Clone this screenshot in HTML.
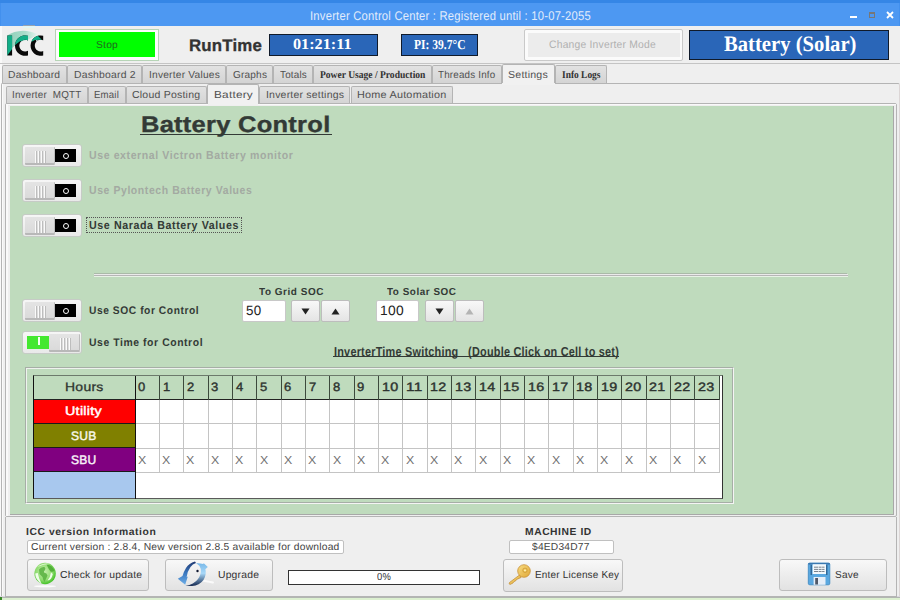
<!DOCTYPE html><html><head><meta charset="utf-8"><style>
html,body{margin:0;padding:0;width:900px;height:600px;overflow:hidden;background:#efefef;position:relative}
div,span,svg{position:absolute}
span{white-space:pre;transform-origin:0 0;text-rendering:geometricPrecision}
</style></head><body>
<div style="left:0px;top:0px;width:900px;height:26px;background:#4d98f2"></div>
<div style="left:0px;top:0px;width:900px;height:3px;background:#3586e6"></div>
<div style="left:0px;top:3px;width:1px;height:23px;background:#4290ee"></div>
<div style="left:899px;top:3px;width:1px;height:23px;background:#4290ee"></div>
<div style="left:0px;top:26px;width:1.5px;height:572px;background:#f9f9f9"></div>
<div style="left:850px;top:16px;width:7px;height:2px;background:#fff"></div>
<div style="left:869px;top:12px;width:6px;height:6px;border:1px solid #777;border-top-width:2px;box-sizing:border-box"></div>
<svg style="position:absolute;left:886px;top:11px" width="8" height="8"><path d="M1 1L7 7M7 1L1 7" stroke="#fff" stroke-width="1.8"/></svg>
<svg style="position:absolute;left:0px;top:25px" width="55" height="37" viewBox="0 25 55 37">
<defs>
<clipPath id="cI"><rect x="7.3" y="35.6" width="4.8" height="20"/></clipPath>
<clipPath id="cC1"><path d="M28,35.8 A10.2,10.2 0 1 0 28,55.4 L28,50.8 A5.9,5.9 0 1 1 28,40.4 Z"/></clipPath>
<clipPath id="cC2"><path d="M43.2,35.7 A10.2,10.2 0 1 0 43.2,55.5 L43.2,50.94 A5.9,5.9 0 1 1 43.2,40.26 Z"/></clipPath>
<linearGradient id="lsw" x1="0" y1="0" x2="1" y2="0"><stop offset="0" stop-color="#8fd0b9"/><stop offset="0.6" stop-color="#a9dccb"/><stop offset="1" stop-color="#e4f2ee"/></linearGradient>
</defs>
<path d="M7.3,35.6 Q14,31 23,30.8 Q31,31 37,34 L34,37 L28,39.5 L19.3,42 L12.1,48 L12.1,35.6 Z" fill="url(#lsw)"/>
<g clip-path="url(#cI)"><rect x="0" y="25" width="55" height="37" fill="#0a0a0a"/><path d="M0,25 H14 V46.5 L7.3,55.5 L0,56 Z" fill="#12ae88"/></g>
<g clip-path="url(#cC1)"><rect x="0" y="25" width="55" height="37" fill="#0a0a0a"/><path d="M0,25 H30 V40.6 L20,41.2 L14,45.8 L0,46 Z" fill="#12ae88"/></g>
<g clip-path="url(#cC2)"><rect x="0" y="25" width="55" height="37" fill="#0a0a0a"/><path d="M0,25 H27.1 L41.8,39.7 L35,40 L30,42.5 L0,43 Z" fill="#12ae88"/><path d="M36,40 L42,40 L40,46 L36,44Z" fill="#d6f2ee" opacity="0.8"/></g>
</svg>
<div style="left:23px;top:25px;width:12px;height:1px;background:#9aa4b0"></div>
<div style="left:23px;top:26px;width:12px;height:2px;background:#e2f6f6"></div>
<div style="left:23px;top:28px;width:12px;height:1.5px;background:#f0f2e4"></div>
<div style="left:55px;top:29px;width:104px;height:32px;border:1px solid #b6d4b6;background:#fcfcfc;box-sizing:border-box"></div>
<div style="left:59px;top:32px;width:96px;height:25px;background:#00ff00"></div>
<div style="left:269px;top:34px;width:109px;height:22px;background:#2a66b8;border:1px solid #101a2a;box-sizing:border-box"></div>
<div style="left:401px;top:34px;width:77px;height:22px;background:#2a66b8;border:1px solid #101a2a;box-sizing:border-box"></div>
<div style="left:524px;top:29px;width:159px;height:32px;border:1px solid #c9c9c9;background:#fbfbfb;box-sizing:border-box;border-radius:2px"></div>
<div style="left:528px;top:33px;width:152px;height:24px;background:#ececec"></div>
<div style="left:689px;top:30px;width:200px;height:29.5px;background:#2a66b8;border:1px solid #101a2a;box-sizing:border-box"></div>
<div style="left:0px;top:63px;width:900px;height:1px;background:#c4c4c4"></div>
<div style="left:2px;top:65px;width:65.2px;height:18px;background:linear-gradient(#e2e2e2,#d4d4d4);border:1px solid #b4b4b4;border-bottom:none;border-radius:2px 2px 0 0;box-sizing:border-box"></div>
<div style="left:67.2px;top:65px;width:74.8px;height:18px;background:linear-gradient(#e2e2e2,#d4d4d4);border:1px solid #b4b4b4;border-bottom:none;border-radius:2px 2px 0 0;box-sizing:border-box"></div>
<div style="left:142.2px;top:65px;width:84.0px;height:18px;background:linear-gradient(#e2e2e2,#d4d4d4);border:1px solid #b4b4b4;border-bottom:none;border-radius:2px 2px 0 0;box-sizing:border-box"></div>
<div style="left:226.2px;top:65px;width:47.10000000000002px;height:18px;background:linear-gradient(#e2e2e2,#d4d4d4);border:1px solid #b4b4b4;border-bottom:none;border-radius:2px 2px 0 0;box-sizing:border-box"></div>
<div style="left:273.3px;top:65px;width:40.0px;height:18px;background:linear-gradient(#e2e2e2,#d4d4d4);border:1px solid #b4b4b4;border-bottom:none;border-radius:2px 2px 0 0;box-sizing:border-box"></div>
<div style="left:313.2px;top:65px;width:118.40000000000003px;height:18px;background:linear-gradient(#e2e2e2,#d4d4d4);border:1px solid #b4b4b4;border-bottom:none;border-radius:2px 2px 0 0;box-sizing:border-box"></div>
<div style="left:431.6px;top:65px;width:70.39999999999998px;height:18px;background:linear-gradient(#e2e2e2,#d4d4d4);border:1px solid #b4b4b4;border-bottom:none;border-radius:2px 2px 0 0;box-sizing:border-box"></div>
<div style="left:502px;top:64px;width:53px;height:20px;background:#f1f1f1;border:1px solid #b4b4b4;border-bottom:none;border-radius:2px 2px 0 0;box-sizing:border-box"></div>
<div style="left:555px;top:65px;width:51.5px;height:18px;background:linear-gradient(#e2e2e2,#d4d4d4);border:1px solid #b4b4b4;border-bottom:none;border-radius:2px 2px 0 0;box-sizing:border-box"></div>
<div style="left:1px;top:83px;width:899px;height:515px;border:1px solid #b4b4b4;border-right-color:#dcd6d6;border-radius:2px;box-sizing:border-box;background:#efefef"></div>
<div style="left:2px;top:84px;width:1px;height:513px;background:#fafafa"></div>
<div style="left:0px;top:596px;width:900px;height:1px;background:#dcd8e0"></div>
<div style="left:0px;top:597px;width:900px;height:1px;background:#b2b6b2"></div>
<div style="left:0px;top:598px;width:900px;height:2px;background:#dcf0d0"></div>
<div style="left:0px;top:597px;width:2px;height:3px;background:#3a8a2a"></div>
<div style="left:502px;top:83px;width:53px;height:1.5px;background:#f1f1f1"></div>
<div style="left:503px;top:83px;width:51px;height:2px;background:#f1f1f1"></div>
<div style="left:5.5px;top:86px;width:82.5px;height:17.5px;background:linear-gradient(#e2e2e2,#d4d4d4);border:1px solid #b4b4b4;border-bottom:none;border-radius:2px 2px 0 0;box-sizing:border-box"></div>
<div style="left:88px;top:86px;width:38px;height:17.5px;background:linear-gradient(#e2e2e2,#d4d4d4);border:1px solid #b4b4b4;border-bottom:none;border-radius:2px 2px 0 0;box-sizing:border-box"></div>
<div style="left:126px;top:86px;width:81.30000000000001px;height:17.5px;background:linear-gradient(#e2e2e2,#d4d4d4);border:1px solid #b4b4b4;border-bottom:none;border-radius:2px 2px 0 0;box-sizing:border-box"></div>
<div style="left:207.3px;top:84px;width:52.0px;height:20.5px;background:#f1f1f1;border:1px solid #b4b4b4;border-bottom:none;border-radius:2px 2px 0 0;box-sizing:border-box"></div>
<div style="left:259.3px;top:86px;width:91.19999999999999px;height:17.5px;background:linear-gradient(#e2e2e2,#d4d4d4);border:1px solid #b4b4b4;border-bottom:none;border-radius:2px 2px 0 0;box-sizing:border-box"></div>
<div style="left:350.5px;top:86px;width:102.5px;height:17.5px;background:linear-gradient(#e2e2e2,#d4d4d4);border:1px solid #b4b4b4;border-bottom:none;border-radius:2px 2px 0 0;box-sizing:border-box"></div>
<div style="left:5px;top:103px;width:892px;height:414px;border:1px solid #b4b4b4;border-radius:2px;box-sizing:border-box;background:#efefef"></div>
<div style="left:6px;top:104px;width:2px;height:412px;background:#f9f9f9"></div>
<div style="left:6px;top:104px;width:890px;height:1px;background:#f9f9f9"></div>
<div style="left:208px;top:103px;width:50px;height:2px;background:#f1f1f1"></div>
<div style="left:5px;top:517px;width:892px;height:80px;border:1px solid #b4b4b4;border-top:none;box-sizing:border-box"></div>
<div style="left:10px;top:106px;width:884px;height:409px;background:#bfdbbd;border-right:1px solid #a8a8a8;border-bottom:1px solid #a8a8a8;box-sizing:border-box"></div>
<div style="left:139.5px;top:133.5px;width:192px;height:1.6px;background:#333a36"></div>
<div style="left:22px;top:144px;width:60px;height:23px;border:1px solid #c6cbc6;border-radius:3px;background:linear-gradient(#f6f6f6,#e9e9e9);box-sizing:border-box"></div><div style="left:55px;top:149px;width:21px;height:13px;background:#000"></div><div style="left:62.5px;top:152.7px;width:6.2px;height:6.2px;border:1.4px solid #fff;border-radius:50%;box-sizing:border-box"></div><div style="left:24.5px;top:146.5px;width:30.5px;height:18.5px;background:linear-gradient(#e4e4e4,#dadada);border-right:1px solid #bcbcbc;border-bottom:2px solid #b8b8b8;box-sizing:border-box;border-radius:1px"></div><div style="left:35.0px;top:150.5px;width:1px;height:12px;background:#fafafa;border-right:1px solid #bdbdbd"></div><div style="left:38.2px;top:150.5px;width:1px;height:12px;background:#fafafa;border-right:1px solid #bdbdbd"></div><div style="left:41.4px;top:150.5px;width:1px;height:12px;background:#fafafa;border-right:1px solid #bdbdbd"></div><div style="left:44.0px;top:150.5px;width:1px;height:12px;background:#fafafa;border-right:1px solid #bdbdbd"></div>
<div style="left:22px;top:179px;width:60px;height:23px;border:1px solid #c6cbc6;border-radius:3px;background:linear-gradient(#f6f6f6,#e9e9e9);box-sizing:border-box"></div><div style="left:55px;top:184px;width:21px;height:13px;background:#000"></div><div style="left:62.5px;top:187.7px;width:6.2px;height:6.2px;border:1.4px solid #fff;border-radius:50%;box-sizing:border-box"></div><div style="left:24.5px;top:181.5px;width:30.5px;height:18.5px;background:linear-gradient(#e4e4e4,#dadada);border-right:1px solid #bcbcbc;border-bottom:2px solid #b8b8b8;box-sizing:border-box;border-radius:1px"></div><div style="left:35.0px;top:185.5px;width:1px;height:12px;background:#fafafa;border-right:1px solid #bdbdbd"></div><div style="left:38.2px;top:185.5px;width:1px;height:12px;background:#fafafa;border-right:1px solid #bdbdbd"></div><div style="left:41.4px;top:185.5px;width:1px;height:12px;background:#fafafa;border-right:1px solid #bdbdbd"></div><div style="left:44.0px;top:185.5px;width:1px;height:12px;background:#fafafa;border-right:1px solid #bdbdbd"></div>
<div style="left:22px;top:214px;width:60px;height:23px;border:1px solid #c6cbc6;border-radius:3px;background:linear-gradient(#f6f6f6,#e9e9e9);box-sizing:border-box"></div><div style="left:55px;top:219px;width:21px;height:13px;background:#000"></div><div style="left:62.5px;top:222.7px;width:6.2px;height:6.2px;border:1.4px solid #fff;border-radius:50%;box-sizing:border-box"></div><div style="left:24.5px;top:216.5px;width:30.5px;height:18.5px;background:linear-gradient(#e4e4e4,#dadada);border-right:1px solid #bcbcbc;border-bottom:2px solid #b8b8b8;box-sizing:border-box;border-radius:1px"></div><div style="left:35.0px;top:220.5px;width:1px;height:12px;background:#fafafa;border-right:1px solid #bdbdbd"></div><div style="left:38.2px;top:220.5px;width:1px;height:12px;background:#fafafa;border-right:1px solid #bdbdbd"></div><div style="left:41.4px;top:220.5px;width:1px;height:12px;background:#fafafa;border-right:1px solid #bdbdbd"></div><div style="left:44.0px;top:220.5px;width:1px;height:12px;background:#fafafa;border-right:1px solid #bdbdbd"></div>
<div style="left:86px;top:217px;width:155.5px;height:16px;border:1px dotted #555;box-sizing:border-box"></div>
<div style="left:94px;top:273px;width:753px;height:1px;background:#aabaa8"></div>
<div style="left:94px;top:274px;width:754px;height:1px;background:#ebebeb"></div>
<div style="left:94px;top:275px;width:754px;height:1px;background:#b6b6b6"></div>
<div style="left:94px;top:276px;width:754px;height:1px;background:#e8f2e6"></div>
<div style="left:22px;top:299px;width:60px;height:23px;border:1px solid #c6cbc6;border-radius:3px;background:linear-gradient(#f6f6f6,#e9e9e9);box-sizing:border-box"></div><div style="left:55px;top:304px;width:21px;height:13px;background:#000"></div><div style="left:62.5px;top:307.7px;width:6.2px;height:6.2px;border:1.4px solid #fff;border-radius:50%;box-sizing:border-box"></div><div style="left:24.5px;top:301.5px;width:30.5px;height:18.5px;background:linear-gradient(#e4e4e4,#dadada);border-right:1px solid #bcbcbc;border-bottom:2px solid #b8b8b8;box-sizing:border-box;border-radius:1px"></div><div style="left:35.0px;top:305.5px;width:1px;height:12px;background:#fafafa;border-right:1px solid #bdbdbd"></div><div style="left:38.2px;top:305.5px;width:1px;height:12px;background:#fafafa;border-right:1px solid #bdbdbd"></div><div style="left:41.4px;top:305.5px;width:1px;height:12px;background:#fafafa;border-right:1px solid #bdbdbd"></div><div style="left:44.0px;top:305.5px;width:1px;height:12px;background:#fafafa;border-right:1px solid #bdbdbd"></div>
<div style="left:22px;top:331px;width:60px;height:23px;border:1px solid #c6cbc6;border-radius:3px;background:linear-gradient(#f6f6f6,#e9e9e9);box-sizing:border-box"></div><div style="left:27px;top:336px;width:22px;height:13px;background:#44e830"></div><div style="left:38px;top:337px;width:2px;height:8px;background:#f4fff0"></div><div style="left:49px;top:333.5px;width:30.5px;height:18.5px;background:linear-gradient(#e4e4e4,#dadada);border-right:1px solid #bcbcbc;border-bottom:2px solid #b8b8b8;box-sizing:border-box;border-radius:1px"></div><div style="left:59.5px;top:337.5px;width:1px;height:12px;background:#fafafa;border-right:1px solid #bdbdbd"></div><div style="left:62.7px;top:337.5px;width:1px;height:12px;background:#fafafa;border-right:1px solid #bdbdbd"></div><div style="left:65.9px;top:337.5px;width:1px;height:12px;background:#fafafa;border-right:1px solid #bdbdbd"></div><div style="left:68.5px;top:337.5px;width:1px;height:12px;background:#fafafa;border-right:1px solid #bdbdbd"></div>
<div style="left:241.5px;top:300px;width:44px;height:21.5px;background:#fff;border:1px solid #c8c8c8;border-radius:2px;box-sizing:border-box"></div>
<div style="left:290.7px;top:300px;width:29px;height:22px;background:linear-gradient(#f8f8f8,#e4e4e4);border:1px solid #bdbdbd;border-radius:2px;box-sizing:border-box"></div>
<svg style="position:absolute;left:300.7px;top:308px" width="9" height="7"><path d="M0.5 0.5H8.5L4.5 6.5Z" fill="#222"/></svg>
<div style="left:321.3px;top:300px;width:29px;height:22px;background:linear-gradient(#f8f8f8,#e4e4e4);border:1px solid #bdbdbd;border-radius:2px;box-sizing:border-box"></div>
<svg style="position:absolute;left:331.3px;top:308px" width="9" height="7"><path d="M0.5 6.5H8.5L4.5 0.5Z" fill="#222"/></svg>
<div style="left:375.5px;top:300px;width:43.5px;height:21.5px;background:#fff;border:1px solid #c8c8c8;border-radius:2px;box-sizing:border-box"></div>
<div style="left:424.6px;top:300px;width:29px;height:22px;background:linear-gradient(#f8f8f8,#e4e4e4);border:1px solid #bdbdbd;border-radius:2px;box-sizing:border-box"></div>
<svg style="position:absolute;left:434.6px;top:308px" width="9" height="7"><path d="M0.5 0.5H8.5L4.5 6.5Z" fill="#222"/></svg>
<div style="left:455.4px;top:300px;width:29px;height:22px;background:linear-gradient(#f8f8f8,#e4e4e4);border:1px solid #bdbdbd;border-radius:2px;box-sizing:border-box"></div>
<svg style="position:absolute;left:465.4px;top:308px" width="9" height="7"><path d="M0.5 6.5H8.5L4.5 0.5Z" fill="#b4b4b4"/></svg>
<div style="left:333px;top:356.3px;width:286px;height:1px;background:#333a36"></div>
<div style="left:25px;top:367px;width:709px;height:137px;border-top:1px solid #a6aea6;border-left:1px solid #a6aea6;border-bottom:1px solid #f4f4f4;border-right:1px solid #f4f4f4;box-sizing:border-box"></div>
<div style="left:26px;top:368px;width:707px;height:135px;border-top:1px solid #eef2ee;border-left:1px solid #eef2ee;border-bottom:1px solid #a6aea6;border-right:1px solid #a6aea6;box-sizing:border-box"></div>
<div style="left:33px;top:374.5px;width:690px;height:124.5px;background:#fff;border:1px solid #111;border-top-color:#6c7a6c;border-bottom-color:#5a5a5a;border-right-color:#333;box-sizing:border-box"></div>
<div style="left:34px;top:375.5px;width:685px;height:24px;background:#bfdbbd"></div>
<div style="left:34px;top:399px;width:685px;height:1px;background:#222"></div>
<div style="left:719px;top:375.5px;width:1px;height:24px;background:#222"></div>
<div style="left:34px;top:399.5px;width:101px;height:23.0px;background:#ff0000"></div>
<div style="left:34px;top:422.5px;width:101px;height:1px;background:#1a1a1a"></div>
<div style="left:34px;top:423.5px;width:101px;height:23.5px;background:#808000"></div>
<div style="left:34px;top:447px;width:101px;height:1px;background:#1a1a1a"></div>
<div style="left:34px;top:448px;width:101px;height:23.30000000000001px;background:#800080"></div>
<div style="left:34px;top:471.3px;width:101px;height:1px;background:#1a1a1a"></div>
<div style="left:34px;top:472.3px;width:101px;height:25.69999999999999px;background:#a8c8ee"></div>
<div style="left:134.5px;top:375.5px;width:1.5px;height:123px;background:#111"></div>
<div style="left:158.84px;top:375.5px;width:1px;height:24px;background:#3c4a3c"></div>
<div style="left:158.84px;top:399.5px;width:1px;height:73px;background:#c4c4c4"></div>
<div style="left:183.18px;top:375.5px;width:1px;height:24px;background:#3c4a3c"></div>
<div style="left:183.18px;top:399.5px;width:1px;height:73px;background:#c4c4c4"></div>
<div style="left:207.51999999999998px;top:375.5px;width:1px;height:24px;background:#3c4a3c"></div>
<div style="left:207.51999999999998px;top:399.5px;width:1px;height:73px;background:#c4c4c4"></div>
<div style="left:231.86px;top:375.5px;width:1px;height:24px;background:#3c4a3c"></div>
<div style="left:231.86px;top:399.5px;width:1px;height:73px;background:#c4c4c4"></div>
<div style="left:256.2px;top:375.5px;width:1px;height:24px;background:#3c4a3c"></div>
<div style="left:256.2px;top:399.5px;width:1px;height:73px;background:#c4c4c4"></div>
<div style="left:280.53999999999996px;top:375.5px;width:1px;height:24px;background:#3c4a3c"></div>
<div style="left:280.53999999999996px;top:399.5px;width:1px;height:73px;background:#c4c4c4"></div>
<div style="left:304.88px;top:375.5px;width:1px;height:24px;background:#3c4a3c"></div>
<div style="left:304.88px;top:399.5px;width:1px;height:73px;background:#c4c4c4"></div>
<div style="left:329.22px;top:375.5px;width:1px;height:24px;background:#3c4a3c"></div>
<div style="left:329.22px;top:399.5px;width:1px;height:73px;background:#c4c4c4"></div>
<div style="left:353.56px;top:375.5px;width:1px;height:24px;background:#3c4a3c"></div>
<div style="left:353.56px;top:399.5px;width:1px;height:73px;background:#c4c4c4"></div>
<div style="left:377.9px;top:375.5px;width:1px;height:24px;background:#3c4a3c"></div>
<div style="left:377.9px;top:399.5px;width:1px;height:73px;background:#c4c4c4"></div>
<div style="left:402.24px;top:375.5px;width:1px;height:24px;background:#3c4a3c"></div>
<div style="left:402.24px;top:399.5px;width:1px;height:73px;background:#c4c4c4"></div>
<div style="left:426.58px;top:375.5px;width:1px;height:24px;background:#3c4a3c"></div>
<div style="left:426.58px;top:399.5px;width:1px;height:73px;background:#c4c4c4"></div>
<div style="left:450.92px;top:375.5px;width:1px;height:24px;background:#3c4a3c"></div>
<div style="left:450.92px;top:399.5px;width:1px;height:73px;background:#c4c4c4"></div>
<div style="left:475.26px;top:375.5px;width:1px;height:24px;background:#3c4a3c"></div>
<div style="left:475.26px;top:399.5px;width:1px;height:73px;background:#c4c4c4"></div>
<div style="left:499.6px;top:375.5px;width:1px;height:24px;background:#3c4a3c"></div>
<div style="left:499.6px;top:399.5px;width:1px;height:73px;background:#c4c4c4"></div>
<div style="left:523.94px;top:375.5px;width:1px;height:24px;background:#3c4a3c"></div>
<div style="left:523.94px;top:399.5px;width:1px;height:73px;background:#c4c4c4"></div>
<div style="left:548.28px;top:375.5px;width:1px;height:24px;background:#3c4a3c"></div>
<div style="left:548.28px;top:399.5px;width:1px;height:73px;background:#c4c4c4"></div>
<div style="left:572.62px;top:375.5px;width:1px;height:24px;background:#3c4a3c"></div>
<div style="left:572.62px;top:399.5px;width:1px;height:73px;background:#c4c4c4"></div>
<div style="left:596.96px;top:375.5px;width:1px;height:24px;background:#3c4a3c"></div>
<div style="left:596.96px;top:399.5px;width:1px;height:73px;background:#c4c4c4"></div>
<div style="left:621.3px;top:375.5px;width:1px;height:24px;background:#3c4a3c"></div>
<div style="left:621.3px;top:399.5px;width:1px;height:73px;background:#c4c4c4"></div>
<div style="left:645.64px;top:375.5px;width:1px;height:24px;background:#3c4a3c"></div>
<div style="left:645.64px;top:399.5px;width:1px;height:73px;background:#c4c4c4"></div>
<div style="left:669.98px;top:375.5px;width:1px;height:24px;background:#3c4a3c"></div>
<div style="left:669.98px;top:399.5px;width:1px;height:73px;background:#c4c4c4"></div>
<div style="left:694.32px;top:375.5px;width:1px;height:24px;background:#3c4a3c"></div>
<div style="left:694.32px;top:399.5px;width:1px;height:73px;background:#c4c4c4"></div>
<div style="left:718.66px;top:375.5px;width:1px;height:24px;background:#3c4a3c"></div>
<div style="left:718.66px;top:399.5px;width:1px;height:73px;background:#c4c4c4"></div>
<div style="left:136px;top:423px;width:583.5px;height:1px;background:#c4c4c4"></div>
<div style="left:136px;top:447.5px;width:583.5px;height:1px;background:#c4c4c4"></div>
<div style="left:136px;top:471.8px;width:583.5px;height:1px;background:#c4c4c4"></div>
<div style="left:26.5px;top:539.5px;width:317px;height:14px;background:#fff;border:1px solid #c0c0c0;border-radius:2px;box-sizing:border-box"></div>
<div style="left:26.5px;top:558.5px;width:122.5px;height:32.5px;background:linear-gradient(#f8f8f8,#e2e2e2);border:1px solid #bdbdbd;border-radius:3px;box-sizing:border-box"></div>
<div style="left:164.5px;top:558.5px;width:108px;height:32.5px;background:linear-gradient(#f8f8f8,#e2e2e2);border:1px solid #bdbdbd;border-radius:3px;box-sizing:border-box"></div>
<div style="left:503px;top:559px;width:120px;height:32.5px;background:linear-gradient(#f8f8f8,#e2e2e2);border:1px solid #bdbdbd;border-radius:3px;box-sizing:border-box"></div>
<div style="left:779px;top:558.5px;width:108px;height:32.5px;background:linear-gradient(#f8f8f8,#e2e2e2);border:1px solid #bdbdbd;border-radius:3px;box-sizing:border-box"></div>
<div style="left:288px;top:570px;width:192px;height:15px;background:#fff;border:1.5px solid #333;box-sizing:border-box"></div>
<div style="left:508.5px;top:539.5px;width:105px;height:14px;background:#fff;border:1px solid #c0c0c0;border-radius:2px;box-sizing:border-box"></div>
<svg style="position:absolute;left:28px;top:558px" width="34" height="32" viewBox="28 558 34 32">
<defs><radialGradient id="gg" cx="0.45" cy="0.42" r="0.6"><stop offset="0" stop-color="#c8f0b0"/><stop offset="0.65" stop-color="#90dc70"/><stop offset="1" stop-color="#3cc020"/></radialGradient></defs>
<ellipse cx="45" cy="586.2" rx="11" ry="1" fill="#fcfcfc"/>
<circle cx="45.1" cy="573.5" r="10.7" fill="url(#gg)"/>
<path d="M39,569.5 Q41,566.5 44.5,567 Q46,568.5 45,570 Q43.5,571 44,572.5 Q47,573 47.5,575.5 Q46,579 44.5,582 Q43,580 42.5,577 Q41,575.5 39.5,574 Z" fill="#58b040" opacity="0.85"/>
<path d="M46.5,564.5 Q52,565 54.5,570.5 Q53,572.5 50.5,571.5 Q48.5,569 46.5,564.5Z" fill="#48a830" opacity="0.85"/>
<path d="M35.2,573.5 Q35.5,580 41.5,583.5 Q38.5,578 37.8,573Z" fill="#f4fff0" opacity="0.95"/>
<path d="M51,572.5 Q50.5,577 47.5,580.5 Q51.5,580 52.8,574Z" fill="#f4fff0" opacity="0.95"/>
<path d="M37.5,567 Q43,562 51,564 Q44,563.5 37.5,567Z" fill="#f0fce8" opacity="0.9"/>
</svg>
<svg style="position:absolute;left:172px;top:558px" width="50" height="32" viewBox="172 558 50 32">
<defs>
<linearGradient id="ugl" x1="0" y1="0" x2="0" y2="1"><stop offset="0" stop-color="#203870"/><stop offset="0.5" stop-color="#3a78c0"/><stop offset="1" stop-color="#70b0e8"/></linearGradient>
<linearGradient id="ugr" x1="0" y1="0" x2="0" y2="1"><stop offset="0" stop-color="#78b8e8"/><stop offset="0.45" stop-color="#a8d8f8"/><stop offset="1" stop-color="#142850"/></linearGradient>
</defs>
<path d="M200,580 L213,582.5" stroke="#fafafa" stroke-width="2" stroke-linecap="round"/>
<path d="M195,561.5 Q189,563 186,568 Q183.5,572 182.5,576 L177.8,578.8 L185.2,584.8 L187.8,576.5 L186.6,577.2 Q187.5,571 190.5,567 Q192.5,564 196,563 Z" fill="url(#ugl)"/>
<path d="M196.1,563 Q201,563.5 203.1,564.1 L203.8,563.2 L207.8,567 L205.3,569.2 L205.2,568.5 Q207,574 203.5,580 Q199.5,585.5 192,586 L185.3,585.8 Q194,584.5 198,579 Q201.5,574 200.8,569 Q200,565.5 196.1,563 Z" fill="url(#ugr)"/>
<circle cx="197.5" cy="571" r="1.2" fill="#101830"/>
</svg>
<svg style="position:absolute;left:503px;top:560px" width="34" height="30" viewBox="503 560 34 30">
<defs><linearGradient id="kg" x1="0" y1="0" x2="1" y2="1"><stop offset="0" stop-color="#f8dc80"/><stop offset="1" stop-color="#e0a838"/></linearGradient></defs>
<path d="M519.5,575 L509.5,582.5 Q508.5,584 510,584.5 L513,583 L514,581.5 L515.5,581 L516.5,579.5 L521,577.5 Z" fill="url(#kg)" stroke="#c08a30" stroke-width="0.7"/>
<circle cx="524" cy="571" r="6.3" fill="url(#kg)" stroke="#c89038" stroke-width="0.8"/>
<circle cx="525" cy="570.3" r="2.2" fill="#f0c858" stroke="#c08a30" stroke-width="0.6"/>
<circle cx="525" cy="570.3" r="0.9" fill="#fff4c8"/>
</svg>
<svg style="position:absolute;left:804px;top:560px" width="30" height="28" viewBox="804 560 30 28">
<rect x="808.3" y="563" width="21.5" height="21.8" rx="1.5" fill="#5aa8e0" stroke="#3a86c0" stroke-width="0.8"/>
<rect x="808.3" y="563" width="21.5" height="1.6" fill="#3a78b0"/>
<rect x="812.6" y="564.2" width="13.4" height="9.8" fill="#f2f8fc"/>
<path d="M814,567.2h10.5M814,569.4h10.5M814,571.5h10.5" stroke="#5a6470" stroke-width="0.8" stroke-dasharray="4 0.6 3 0.5"/>
<rect x="810.6" y="565" width="1.2" height="10" fill="#2a5a88"/>
<rect x="826.2" y="565" width="1.2" height="10" fill="#2a5a88"/>
<rect x="813.6" y="577" width="11.9" height="7.8" fill="#e6eef8"/>
<rect x="815.2" y="578" width="2.8" height="6.5" fill="#505868"/>
</svg>
<span id="t0" style="left:310.00px;top:10.00px;font-size:12.6px;line-height:12.6px;font-family:'Liberation Sans', sans-serif;font-weight:normal;color:#e2ecfb;letter-spacing:0.02em;transform:scaleX(0.8924);">Inverter Control Center : Registered until : 10-07-2055</span>
<span id="t1" style="left:95.70px;top:41.00px;font-size:10.2px;line-height:10.2px;font-family:'Liberation Sans', sans-serif;font-weight:normal;color:#1f6a1f;letter-spacing:0.02em;transform:scaleX(1.0100);">Stop</span>
<span id="t2" style="left:189.00px;top:38.00px;font-size:16.9px;line-height:16.9px;font-family:'Liberation Sans', sans-serif;font-weight:bold;color:#333;letter-spacing:0.01em;transform:scaleX(0.9981);-webkit-text-stroke:0.3px #333;">RunTime</span>
<span id="t3" style="left:293.00px;top:37.00px;font-size:15.3px;line-height:15.3px;font-family:'Liberation Serif', serif;font-weight:bold;color:#fff;letter-spacing:0em;transform:scaleX(1.0588);">01:21:11</span>
<span id="t4" style="left:413.50px;top:38.00px;font-size:13.7px;line-height:13.7px;font-family:'Liberation Serif', serif;font-weight:bold;color:#fff;letter-spacing:0em;transform:scaleX(0.8445);">PI: 39.7°C</span>
<span id="t5" style="left:549.30px;top:40.00px;font-size:10.9px;line-height:10.9px;font-family:'Liberation Sans', sans-serif;font-weight:normal;color:#b0b0b0;letter-spacing:0.02em;transform:scaleX(0.9491);">Change Inverter Mode</span>
<span id="t6" style="left:724.00px;top:33.00px;font-size:22px;line-height:22px;font-family:'Liberation Serif', serif;font-weight:bold;color:#fff;letter-spacing:0em;transform:scaleX(0.9389);">Battery (Solar)</span>
<span id="t7" style="left:8.30px;top:71.00px;font-size:10.2px;line-height:10.2px;font-family:'Liberation Sans', sans-serif;font-weight:normal;color:#505050;letter-spacing:0.02em;transform:scaleX(1.0099);">Dashboard</span>
<span id="t8" style="left:73.50px;top:71.00px;font-size:10.2px;line-height:10.2px;font-family:'Liberation Sans', sans-serif;font-weight:normal;color:#505050;letter-spacing:0.02em;transform:scaleX(1.0199);">Dashboard 2</span>
<span id="t9" style="left:148.50px;top:71.00px;font-size:10.2px;line-height:10.2px;font-family:'Liberation Sans', sans-serif;font-weight:normal;color:#505050;letter-spacing:0.02em;transform:scaleX(1.0024);">Inverter Values</span>
<span id="t10" style="left:232.50px;top:71.00px;font-size:10.2px;line-height:10.2px;font-family:'Liberation Sans', sans-serif;font-weight:normal;color:#505050;letter-spacing:0.02em;transform:scaleX(0.9844);">Graphs</span>
<span id="t11" style="left:279.60px;top:71.00px;font-size:10.2px;line-height:10.2px;font-family:'Liberation Sans', sans-serif;font-weight:normal;color:#505050;letter-spacing:0.02em;transform:scaleX(0.9697);">Totals</span>
<span id="t12" style="left:319.70px;top:71.00px;font-size:10.5px;line-height:10.5px;font-family:'Liberation Serif', serif;font-weight:bold;color:#303030;letter-spacing:0em;transform:scaleX(0.9087);">Power Usage / Production</span>
<span id="t13" style="left:437.90px;top:71.00px;font-size:10.2px;line-height:10.2px;font-family:'Liberation Sans', sans-serif;font-weight:normal;color:#505050;letter-spacing:0.02em;transform:scaleX(0.9622);">Threads Info</span>
<span id="t14" style="left:508.30px;top:71.00px;font-size:10.2px;line-height:10.2px;font-family:'Liberation Sans', sans-serif;font-weight:normal;color:#505050;letter-spacing:0.02em;transform:scaleX(1.0402);">Settings</span>
<span id="t15" style="left:561.50px;top:71.00px;font-size:10.5px;line-height:10.5px;font-family:'Liberation Serif', serif;font-weight:bold;color:#303030;letter-spacing:0em;transform:scaleX(0.8976);">Info Logs</span>
<span id="t16" style="left:11.80px;top:91.00px;font-size:10.2px;line-height:10.2px;font-family:'Liberation Sans', sans-serif;font-weight:normal;color:#505050;letter-spacing:0.02em;transform:scaleX(0.9663);">Inverter&nbsp;&nbsp;MQTT</span>
<span id="t17" style="left:94.30px;top:91.00px;font-size:10.2px;line-height:10.2px;font-family:'Liberation Sans', sans-serif;font-weight:normal;color:#505050;letter-spacing:0.02em;transform:scaleX(0.9434);">Email</span>
<span id="t18" style="left:132.30px;top:91.00px;font-size:10.2px;line-height:10.2px;font-family:'Liberation Sans', sans-serif;font-weight:normal;color:#505050;letter-spacing:0.02em;transform:scaleX(1.0334);">Cloud Posting</span>
<span id="t19" style="left:213.60px;top:91.00px;font-size:10.2px;line-height:10.2px;font-family:'Liberation Sans', sans-serif;font-weight:normal;color:#505050;letter-spacing:0.02em;transform:scaleX(1.1572);">Battery</span>
<span id="t20" style="left:265.60px;top:91.00px;font-size:10.2px;line-height:10.2px;font-family:'Liberation Sans', sans-serif;font-weight:normal;color:#505050;letter-spacing:0.02em;transform:scaleX(1.0296);">Inverter settings</span>
<span id="t21" style="left:356.80px;top:91.00px;font-size:10.2px;line-height:10.2px;font-family:'Liberation Sans', sans-serif;font-weight:normal;color:#505050;letter-spacing:0.02em;transform:scaleX(1.0649);">Home Automation</span>
<span id="t22" style="left:141.20px;top:114.00px;font-size:22.6px;line-height:22.6px;font-family:'Liberation Sans', sans-serif;font-weight:bold;color:#333a36;letter-spacing:0.01em;transform:scaleX(1.1290);-webkit-text-stroke:0.35px #333a36;">Battery Control</span>
<span id="t23" style="left:89.00px;top:151.00px;font-size:11.5px;line-height:11.5px;font-family:'Liberation Sans', sans-serif;font-weight:bold;color:#a3aaa2;letter-spacing:0.055em;transform:scaleX(0.9183);">Use external Victron Battery monitor</span>
<span id="t24" style="left:89.00px;top:186.00px;font-size:11.5px;line-height:11.5px;font-family:'Liberation Sans', sans-serif;font-weight:bold;color:#a3aaa2;letter-spacing:0.055em;transform:scaleX(0.9107);">Use Pylontech Battery Values</span>
<span id="t25" style="left:89.00px;top:221.00px;font-size:11.5px;line-height:11.5px;font-family:'Liberation Sans', sans-serif;font-weight:bold;color:#333a36;letter-spacing:0.055em;transform:scaleX(0.9284);">Use Narada Battery Values</span>
<span id="t26" style="left:89.00px;top:306.00px;font-size:11px;line-height:11px;font-family:'Liberation Sans', sans-serif;font-weight:bold;color:#333a36;letter-spacing:0.055em;transform:scaleX(0.9303);">Use SOC for Control</span>
<span id="t27" style="left:89.00px;top:338.00px;font-size:11px;line-height:11px;font-family:'Liberation Sans', sans-serif;font-weight:bold;color:#333a36;letter-spacing:0.055em;transform:scaleX(0.9454);">Use Time for Control</span>
<span id="t28" style="left:259.00px;top:288.00px;font-size:10.2px;line-height:10.2px;font-family:'Liberation Sans', sans-serif;font-weight:bold;color:#333a36;letter-spacing:0.055em;transform:scaleX(0.9768);">To Grid SOC</span>
<span id="t29" style="left:386.70px;top:288.00px;font-size:10.2px;line-height:10.2px;font-family:'Liberation Sans', sans-serif;font-weight:bold;color:#333a36;letter-spacing:0.055em;transform:scaleX(0.9687);">To Solar SOC</span>
<span id="t30" style="left:245.60px;top:304.00px;font-size:13.6px;line-height:13.6px;font-family:'Liberation Sans', sans-serif;font-weight:normal;color:#222;letter-spacing:0.02em;transform:scaleX(0.9827);">50</span>
<span id="t31" style="left:379.50px;top:304.00px;font-size:13.6px;line-height:13.6px;font-family:'Liberation Sans', sans-serif;font-weight:normal;color:#222;letter-spacing:0.02em;transform:scaleX(1.0170);">100</span>
<span id="t32" style="left:333.50px;top:345.00px;font-size:13px;line-height:13px;font-family:'Liberation Sans', sans-serif;font-weight:normal;color:#333a36;letter-spacing:0.02em;transform:scaleX(0.8375);font-weight:bold;">InverterTime&nbsp;Switching&nbsp;&nbsp;&nbsp;(Double&nbsp;Click&nbsp;on&nbsp;Cell&nbsp;to&nbsp;set)</span>
<span id="t33" style="left:138.20px;top:381.00px;font-size:12.2px;line-height:12.2px;font-family:'Liberation Sans', sans-serif;font-weight:normal;color:#2e3430;letter-spacing:0.02em;transform:scaleX(1.0667);-webkit-text-stroke:0.4px #2e3430;">0</span>
<span id="t34" style="left:137.80px;top:456.00px;font-size:11.5px;line-height:11.5px;font-family:'Liberation Sans', sans-serif;font-weight:normal;color:#707070;letter-spacing:0.02em;transform:scaleX(1.0751);">X</span>
<span id="t35" style="left:162.54px;top:381.00px;font-size:12.2px;line-height:12.2px;font-family:'Liberation Sans', sans-serif;font-weight:normal;color:#2e3430;letter-spacing:0.02em;transform:scaleX(1.0667);-webkit-text-stroke:0.4px #2e3430;">1</span>
<span id="t36" style="left:162.14px;top:456.00px;font-size:11.5px;line-height:11.5px;font-family:'Liberation Sans', sans-serif;font-weight:normal;color:#707070;letter-spacing:0.02em;transform:scaleX(1.0751);">X</span>
<span id="t37" style="left:186.88px;top:381.00px;font-size:12.2px;line-height:12.2px;font-family:'Liberation Sans', sans-serif;font-weight:normal;color:#2e3430;letter-spacing:0.02em;transform:scaleX(1.0667);-webkit-text-stroke:0.4px #2e3430;">2</span>
<span id="t38" style="left:186.48px;top:456.00px;font-size:11.5px;line-height:11.5px;font-family:'Liberation Sans', sans-serif;font-weight:normal;color:#707070;letter-spacing:0.02em;transform:scaleX(1.0751);">X</span>
<span id="t39" style="left:211.22px;top:381.00px;font-size:12.2px;line-height:12.2px;font-family:'Liberation Sans', sans-serif;font-weight:normal;color:#2e3430;letter-spacing:0.02em;transform:scaleX(1.0667);-webkit-text-stroke:0.4px #2e3430;">3</span>
<span id="t40" style="left:210.82px;top:456.00px;font-size:11.5px;line-height:11.5px;font-family:'Liberation Sans', sans-serif;font-weight:normal;color:#707070;letter-spacing:0.02em;transform:scaleX(1.0751);">X</span>
<span id="t41" style="left:235.56px;top:381.00px;font-size:12.2px;line-height:12.2px;font-family:'Liberation Sans', sans-serif;font-weight:normal;color:#2e3430;letter-spacing:0.02em;transform:scaleX(1.0667);-webkit-text-stroke:0.4px #2e3430;">4</span>
<span id="t42" style="left:235.16px;top:456.00px;font-size:11.5px;line-height:11.5px;font-family:'Liberation Sans', sans-serif;font-weight:normal;color:#707070;letter-spacing:0.02em;transform:scaleX(1.0751);">X</span>
<span id="t43" style="left:259.90px;top:381.00px;font-size:12.2px;line-height:12.2px;font-family:'Liberation Sans', sans-serif;font-weight:normal;color:#2e3430;letter-spacing:0.02em;transform:scaleX(1.0667);-webkit-text-stroke:0.4px #2e3430;">5</span>
<span id="t44" style="left:259.50px;top:456.00px;font-size:11.5px;line-height:11.5px;font-family:'Liberation Sans', sans-serif;font-weight:normal;color:#707070;letter-spacing:0.02em;transform:scaleX(1.0751);">X</span>
<span id="t45" style="left:284.24px;top:381.00px;font-size:12.2px;line-height:12.2px;font-family:'Liberation Sans', sans-serif;font-weight:normal;color:#2e3430;letter-spacing:0.02em;transform:scaleX(1.0667);-webkit-text-stroke:0.4px #2e3430;">6</span>
<span id="t46" style="left:283.84px;top:456.00px;font-size:11.5px;line-height:11.5px;font-family:'Liberation Sans', sans-serif;font-weight:normal;color:#707070;letter-spacing:0.02em;transform:scaleX(1.0751);">X</span>
<span id="t47" style="left:308.58px;top:381.00px;font-size:12.2px;line-height:12.2px;font-family:'Liberation Sans', sans-serif;font-weight:normal;color:#2e3430;letter-spacing:0.02em;transform:scaleX(1.0667);-webkit-text-stroke:0.4px #2e3430;">7</span>
<span id="t48" style="left:308.18px;top:456.00px;font-size:11.5px;line-height:11.5px;font-family:'Liberation Sans', sans-serif;font-weight:normal;color:#707070;letter-spacing:0.02em;transform:scaleX(1.0751);">X</span>
<span id="t49" style="left:332.92px;top:381.00px;font-size:12.2px;line-height:12.2px;font-family:'Liberation Sans', sans-serif;font-weight:normal;color:#2e3430;letter-spacing:0.02em;transform:scaleX(1.0667);-webkit-text-stroke:0.4px #2e3430;">8</span>
<span id="t50" style="left:332.52px;top:456.00px;font-size:11.5px;line-height:11.5px;font-family:'Liberation Sans', sans-serif;font-weight:normal;color:#707070;letter-spacing:0.02em;transform:scaleX(1.0751);">X</span>
<span id="t51" style="left:357.26px;top:381.00px;font-size:12.2px;line-height:12.2px;font-family:'Liberation Sans', sans-serif;font-weight:normal;color:#2e3430;letter-spacing:0.02em;transform:scaleX(1.0667);-webkit-text-stroke:0.4px #2e3430;">9</span>
<span id="t52" style="left:356.86px;top:456.00px;font-size:11.5px;line-height:11.5px;font-family:'Liberation Sans', sans-serif;font-weight:normal;color:#707070;letter-spacing:0.02em;transform:scaleX(1.0751);">X</span>
<span id="t53" style="left:381.60px;top:381.00px;font-size:12.2px;line-height:12.2px;font-family:'Liberation Sans', sans-serif;font-weight:normal;color:#2e3430;letter-spacing:0.02em;transform:scaleX(1.1746);-webkit-text-stroke:0.4px #2e3430;">10</span>
<span id="t54" style="left:381.20px;top:456.00px;font-size:11.5px;line-height:11.5px;font-family:'Liberation Sans', sans-serif;font-weight:normal;color:#707070;letter-spacing:0.02em;transform:scaleX(1.0751);">X</span>
<span id="t55" style="left:405.94px;top:381.00px;font-size:12.2px;line-height:12.2px;font-family:'Liberation Sans', sans-serif;font-weight:normal;color:#2e3430;letter-spacing:0.02em;transform:scaleX(1.2556);-webkit-text-stroke:0.4px #2e3430;">11</span>
<span id="t56" style="left:405.54px;top:456.00px;font-size:11.5px;line-height:11.5px;font-family:'Liberation Sans', sans-serif;font-weight:normal;color:#707070;letter-spacing:0.02em;transform:scaleX(1.0751);">X</span>
<span id="t57" style="left:430.28px;top:381.00px;font-size:12.2px;line-height:12.2px;font-family:'Liberation Sans', sans-serif;font-weight:normal;color:#2e3430;letter-spacing:0.02em;transform:scaleX(1.1746);-webkit-text-stroke:0.4px #2e3430;">12</span>
<span id="t58" style="left:429.88px;top:456.00px;font-size:11.5px;line-height:11.5px;font-family:'Liberation Sans', sans-serif;font-weight:normal;color:#707070;letter-spacing:0.02em;transform:scaleX(1.0751);">X</span>
<span id="t59" style="left:454.62px;top:381.00px;font-size:12.2px;line-height:12.2px;font-family:'Liberation Sans', sans-serif;font-weight:normal;color:#2e3430;letter-spacing:0.02em;transform:scaleX(1.1746);-webkit-text-stroke:0.4px #2e3430;">13</span>
<span id="t60" style="left:454.22px;top:456.00px;font-size:11.5px;line-height:11.5px;font-family:'Liberation Sans', sans-serif;font-weight:normal;color:#707070;letter-spacing:0.02em;transform:scaleX(1.0751);">X</span>
<span id="t61" style="left:478.96px;top:381.00px;font-size:12.2px;line-height:12.2px;font-family:'Liberation Sans', sans-serif;font-weight:normal;color:#2e3430;letter-spacing:0.02em;transform:scaleX(1.1746);-webkit-text-stroke:0.4px #2e3430;">14</span>
<span id="t62" style="left:478.56px;top:456.00px;font-size:11.5px;line-height:11.5px;font-family:'Liberation Sans', sans-serif;font-weight:normal;color:#707070;letter-spacing:0.02em;transform:scaleX(1.0751);">X</span>
<span id="t63" style="left:503.30px;top:381.00px;font-size:12.2px;line-height:12.2px;font-family:'Liberation Sans', sans-serif;font-weight:normal;color:#2e3430;letter-spacing:0.02em;transform:scaleX(1.1746);-webkit-text-stroke:0.4px #2e3430;">15</span>
<span id="t64" style="left:502.90px;top:456.00px;font-size:11.5px;line-height:11.5px;font-family:'Liberation Sans', sans-serif;font-weight:normal;color:#707070;letter-spacing:0.02em;transform:scaleX(1.0751);">X</span>
<span id="t65" style="left:527.64px;top:381.00px;font-size:12.2px;line-height:12.2px;font-family:'Liberation Sans', sans-serif;font-weight:normal;color:#2e3430;letter-spacing:0.02em;transform:scaleX(1.1746);-webkit-text-stroke:0.4px #2e3430;">16</span>
<span id="t66" style="left:527.24px;top:456.00px;font-size:11.5px;line-height:11.5px;font-family:'Liberation Sans', sans-serif;font-weight:normal;color:#707070;letter-spacing:0.02em;transform:scaleX(1.0751);">X</span>
<span id="t67" style="left:551.98px;top:381.00px;font-size:12.2px;line-height:12.2px;font-family:'Liberation Sans', sans-serif;font-weight:normal;color:#2e3430;letter-spacing:0.02em;transform:scaleX(1.1746);-webkit-text-stroke:0.4px #2e3430;">17</span>
<span id="t68" style="left:551.58px;top:456.00px;font-size:11.5px;line-height:11.5px;font-family:'Liberation Sans', sans-serif;font-weight:normal;color:#707070;letter-spacing:0.02em;transform:scaleX(1.0751);">X</span>
<span id="t69" style="left:576.32px;top:381.00px;font-size:12.2px;line-height:12.2px;font-family:'Liberation Sans', sans-serif;font-weight:normal;color:#2e3430;letter-spacing:0.02em;transform:scaleX(1.1746);-webkit-text-stroke:0.4px #2e3430;">18</span>
<span id="t70" style="left:575.92px;top:456.00px;font-size:11.5px;line-height:11.5px;font-family:'Liberation Sans', sans-serif;font-weight:normal;color:#707070;letter-spacing:0.02em;transform:scaleX(1.0751);">X</span>
<span id="t71" style="left:600.66px;top:381.00px;font-size:12.2px;line-height:12.2px;font-family:'Liberation Sans', sans-serif;font-weight:normal;color:#2e3430;letter-spacing:0.02em;transform:scaleX(1.1746);-webkit-text-stroke:0.4px #2e3430;">19</span>
<span id="t72" style="left:600.26px;top:456.00px;font-size:11.5px;line-height:11.5px;font-family:'Liberation Sans', sans-serif;font-weight:normal;color:#707070;letter-spacing:0.02em;transform:scaleX(1.0751);">X</span>
<span id="t73" style="left:625.00px;top:381.00px;font-size:12.2px;line-height:12.2px;font-family:'Liberation Sans', sans-serif;font-weight:normal;color:#2e3430;letter-spacing:0.02em;transform:scaleX(1.1746);-webkit-text-stroke:0.4px #2e3430;">20</span>
<span id="t74" style="left:624.60px;top:456.00px;font-size:11.5px;line-height:11.5px;font-family:'Liberation Sans', sans-serif;font-weight:normal;color:#707070;letter-spacing:0.02em;transform:scaleX(1.0751);">X</span>
<span id="t75" style="left:649.34px;top:381.00px;font-size:12.2px;line-height:12.2px;font-family:'Liberation Sans', sans-serif;font-weight:normal;color:#2e3430;letter-spacing:0.02em;transform:scaleX(1.1746);-webkit-text-stroke:0.4px #2e3430;">21</span>
<span id="t76" style="left:648.94px;top:456.00px;font-size:11.5px;line-height:11.5px;font-family:'Liberation Sans', sans-serif;font-weight:normal;color:#707070;letter-spacing:0.02em;transform:scaleX(1.0751);">X</span>
<span id="t77" style="left:673.68px;top:381.00px;font-size:12.2px;line-height:12.2px;font-family:'Liberation Sans', sans-serif;font-weight:normal;color:#2e3430;letter-spacing:0.02em;transform:scaleX(1.1746);-webkit-text-stroke:0.4px #2e3430;">22</span>
<span id="t78" style="left:673.28px;top:456.00px;font-size:11.5px;line-height:11.5px;font-family:'Liberation Sans', sans-serif;font-weight:normal;color:#707070;letter-spacing:0.02em;transform:scaleX(1.0751);">X</span>
<span id="t79" style="left:698.02px;top:381.00px;font-size:12.2px;line-height:12.2px;font-family:'Liberation Sans', sans-serif;font-weight:normal;color:#2e3430;letter-spacing:0.02em;transform:scaleX(1.1746);-webkit-text-stroke:0.4px #2e3430;">23</span>
<span id="t80" style="left:697.62px;top:456.00px;font-size:11.5px;line-height:11.5px;font-family:'Liberation Sans', sans-serif;font-weight:normal;color:#707070;letter-spacing:0.02em;transform:scaleX(1.0751);">X</span>
<span id="t81" style="left:64.60px;top:381.00px;font-size:12.3px;line-height:12.3px;font-family:'Liberation Sans', sans-serif;font-weight:normal;color:#2e3430;letter-spacing:0.02em;transform:scaleX(1.1337);-webkit-text-stroke:0.3px #2e3430;">Hours</span>
<span id="t82" style="left:64.50px;top:405.00px;font-size:12.3px;line-height:12.3px;font-family:'Liberation Sans', sans-serif;font-weight:normal;color:#fff;letter-spacing:0.02em;transform:scaleX(1.1642);-webkit-text-stroke:0.45px #fff;">Utility</span>
<span id="t83" style="left:70.80px;top:430.00px;font-size:12.3px;line-height:12.3px;font-family:'Liberation Sans', sans-serif;font-weight:normal;color:#f6f6e6;letter-spacing:0.02em;transform:scaleX(0.9796);-webkit-text-stroke:0.45px #f6f6e6;">SUB</span>
<span id="t84" style="left:70.80px;top:454.00px;font-size:12.3px;line-height:12.3px;font-family:'Liberation Sans', sans-serif;font-weight:normal;color:#f6f0f6;letter-spacing:0.02em;transform:scaleX(0.9796);-webkit-text-stroke:0.45px #f6f0f6;">SBU</span>
<span id="t85" style="left:25.70px;top:528.00px;font-size:10.2px;line-height:10.2px;font-family:'Liberation Sans', sans-serif;font-weight:bold;color:#333;letter-spacing:0.055em;transform:scaleX(1.0150);">ICC version Information</span>
<span id="t86" style="left:31.00px;top:543.00px;font-size:10.2px;line-height:10.2px;font-family:'Liberation Sans', sans-serif;font-weight:normal;color:#444;letter-spacing:0.02em;transform:scaleX(1.0099);">Current version : 2.8.4, New version 2.8.5 available for download</span>
<span id="t87" style="left:59.80px;top:571.00px;font-size:10.2px;line-height:10.2px;font-family:'Liberation Sans', sans-serif;font-weight:normal;color:#333;letter-spacing:0.02em;transform:scaleX(1.0178);">Check for update</span>
<span id="t88" style="left:217.80px;top:571.00px;font-size:10.2px;line-height:10.2px;font-family:'Liberation Sans', sans-serif;font-weight:normal;color:#333;letter-spacing:0.02em;transform:scaleX(1.0144);">Upgrade</span>
<span id="t89" style="left:534.90px;top:571.00px;font-size:10.2px;line-height:10.2px;font-family:'Liberation Sans', sans-serif;font-weight:normal;color:#333;letter-spacing:0.02em;transform:scaleX(0.9785);">Enter License Key</span>
<span id="t90" style="left:834.60px;top:571.00px;font-size:10.2px;line-height:10.2px;font-family:'Liberation Sans', sans-serif;font-weight:normal;color:#333;letter-spacing:0.02em;transform:scaleX(0.9856);">Save</span>
<span id="t91" style="left:377.00px;top:573.00px;font-size:10.2px;line-height:10.2px;font-family:'Liberation Sans', sans-serif;font-weight:normal;color:#333;letter-spacing:0.02em;transform:scaleX(0.9247);">0%</span>
<span id="t92" style="left:525.00px;top:528.00px;font-size:10.2px;line-height:10.2px;font-family:'Liberation Sans', sans-serif;font-weight:bold;color:#333;letter-spacing:0.055em;transform:scaleX(1.0095);">MACHINE ID</span>
<span id="t93" style="left:532.00px;top:543.00px;font-size:10.2px;line-height:10.2px;font-family:'Liberation Sans', sans-serif;font-weight:normal;color:#444;letter-spacing:0.02em;transform:scaleX(1.0045);">$4ED34D77</span>
</body></html>
